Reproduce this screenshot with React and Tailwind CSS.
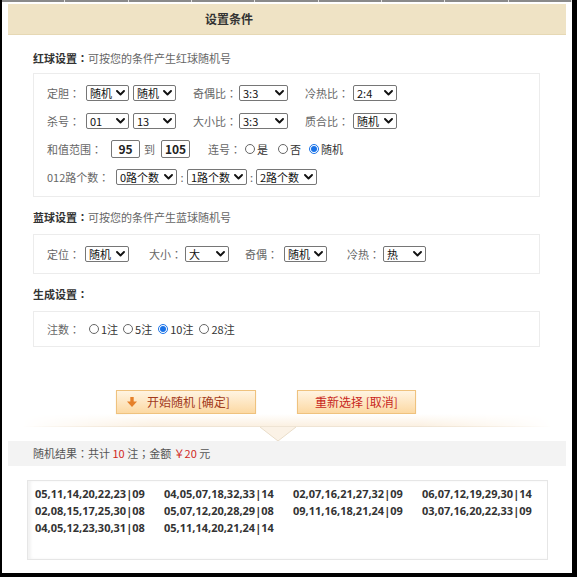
import React from "react";

function C({ ch = "：" }) {
  return <span className="font-['Noto_Sans_CJK_JP',sans-serif]">{ch}</span>;
}

function Chevron() {
  return (
    <svg width="9" height="6" viewBox="0 0 9 6" className="shrink-0">
      <path d="M1 1 L4.5 4.5 L8 1" fill="none" stroke="#111" strokeWidth="1.9" strokeLinecap="round" strokeLinejoin="round" />
    </svg>
  );
}

function Sel({ value, w }) {
  return (
    <div
      className={`flex items-center justify-between h-[16px] border border-[#767676] rounded-[2px] bg-white pl-[3px] pr-[3px] text-[11px] text-[#111] leading-none ${w}`}
    >
      <span>{value}</span>
      <Chevron />
    </div>
  );
}

function Radio({ label, checked }) {
  return (
    <div className="flex items-center text-[11px] text-[#333]">
      {checked ? (
        <span className="w-[10px] h-[10px] rounded-full border border-[#1a73e8] flex items-center justify-center mr-[2px]">
          <span className="w-[6px] h-[6px] rounded-full bg-[#1a73e8]" />
        </span>
      ) : (
        <span className="w-[10px] h-[10px] rounded-full border border-[#666] bg-white mr-[2px]" />
      )}
      <span>{label}</span>
    </div>
  );
}

function Label({ children, w, ml = "" }) {
  return (
    <span className={`text-[11px] text-[#666] shrink-0 ${w} ${ml}`}>
      {children}
      <C />
    </span>
  );
}

function NumInput({ value }) {
  return (
    <div className="w-[29px] h-[18px] border border-[#767676] rounded-[2px] flex items-center justify-center text-[12px] font-bold text-[#222] bg-white">
      {value}
    </div>
  );
}

const results = [
  "05,11,14,20,22,23|09",
  "04,05,07,18,32,33|14",
  "02,07,16,21,27,32|09",
  "06,07,12,19,29,30|14",
  "02,08,15,17,25,30|08",
  "05,07,12,20,28,29|08",
  "09,11,16,18,21,24|09",
  "03,07,16,20,22,33|09",
  "04,05,12,23,30,31|08",
  "05,11,14,20,21,24|14",
];

export default function App() {
  return (
    <div className="w-[577px] h-[577px] overflow-hidden bg-white border-l-2 border-r-[5px] border-b-4 border-black font-['Noto_Sans_CJK_SC','Noto_Sans',sans-serif]">
      {/* top strip */}
      <div className="h-[2px] bg-[#8a8a8a] flex">
        {Array.from({ length: 9 }).map((_, i) => (
          <div key={i} className="w-[64px] h-[2px] border-r border-[#e0e0e0]" />
        ))}
      </div>
      {/* header */}
      <div className="mt-[2px] mx-[6px] h-[31px] bg-[#efe3c5] border-b border-[#e6d8b4] flex items-center pl-[197px] text-[12px] font-bold text-[#333]">
        设置条件
      </div>

      {/* red ball */}
      <div className="pl-[31px] mt-[15px] h-[16px] leading-[16px] text-[11px]">
        <span className="font-bold text-[#333]">红球设置<C /></span>
        <span className="text-[#666]">可按您的条件产生红球随机号</span>
      </div>
      <div className="ml-[31px] mt-[7px] w-[507px] h-[124px] border border-[#ececec] pt-[5px] pl-[13px]">
        <div className="flex items-center h-[28px]">
          <Label w="w-[39px]">定胆</Label>
          <Sel value="随机" w="w-[43px]" />
          <div className="w-[4px]" />
          <Sel value="随机" w="w-[43px]" />
          <Label w="w-[46px]" ml="ml-[17px]">奇偶比</Label>
          <Sel value="3:3" w="w-[49px]" />
          <Label w="w-[48px]" ml="ml-[17px]">冷热比</Label>
          <Sel value="2:4" w="w-[44px]" />
        </div>
        <div className="flex items-center h-[28px]">
          <Label w="w-[39px]">杀号</Label>
          <Sel value="01" w="w-[43px]" />
          <div className="w-[4px]" />
          <Sel value="13" w="w-[43px]" />
          <Label w="w-[46px]" ml="ml-[17px]">大小比</Label>
          <Sel value="3:3" w="w-[49px]" />
          <Label w="w-[48px]" ml="ml-[17px]">质合比</Label>
          <Sel value="随机" w="w-[44px]" />
        </div>
        <div className="flex items-center h-[28px]">
          <Label w="w-[64px]">和值范围</Label>
          <NumInput value="95" />
          <span className="text-[11px] text-[#666] ml-[4px] mr-[6px]">到</span>
          <NumInput value="105" />
          <Label w="w-[37px]" ml="ml-[18px]">连号</Label>
          <Radio label="是" />
          <div className="w-[10px]" />
          <Radio label="否" />
          <div className="w-[8px]" />
          <Radio label="随机" checked />
        </div>
        <div className="flex items-center h-[28px]">
          <Label w="w-[69px]">012路个数</Label>
          <Sel value="0路个数" w="w-[61px]" />
          <span className="text-[11px] text-[#666] w-[10px] text-center">:</span>
          <Sel value="1路个数" w="w-[60px]" />
          <span className="text-[11px] text-[#666] w-[9px] text-center">:</span>
          <Sel value="2路个数" w="w-[61px]" />
        </div>
      </div>

      {/* blue ball */}
      <div className="pl-[31px] mt-[12px] h-[16px] leading-[16px] text-[11px]">
        <span className="font-bold text-[#333]">蓝球设置<C /></span>
        <span className="text-[#666]">可按您的条件产生蓝球随机号</span>
      </div>
      <div className="ml-[31px] mt-[9px] w-[507px] h-[40px] border border-[#ececec] pt-[5px] pl-[13px]">
        <div className="flex items-center h-[28px]">
          <Label w="w-[38px]">定位</Label>
          <Sel value="随机" w="w-[44px]" />
          <Label w="w-[36px]" ml="ml-[20px]">大小</Label>
          <Sel value="大" w="w-[44px]" />
          <Label w="w-[39px]" ml="ml-[16px]">奇偶</Label>
          <Sel value="随机" w="w-[43px]" />
          <Label w="w-[36px]" ml="ml-[20px]">冷热</Label>
          <Sel value="热" w="w-[43px]" />
        </div>
      </div>

      {/* generate */}
      <div className="pl-[31px] mt-[12px] h-[16px] leading-[16px] text-[11px]">
        <span className="font-bold text-[#333]">生成设置<C /></span>
      </div>
      <div className="ml-[31px] mt-[9px] w-[507px] h-[36px] border border-[#ececec] pt-[3px] pl-[13px]">
        <div className="flex items-center h-[28px]">
          <Label w="w-[42px]">注数</Label>
          <Radio label="1注" />
          <div className="w-[5px]" />
          <Radio label="5注" />
          <div className="w-[6px]" />
          <Radio label="10注" checked />
          <div className="w-[6px]" />
          <Radio label="28注" />
        </div>
      </div>

      {/* buttons */}
      <div className="mt-[43px] flex pl-[114px] h-[24px]">
        <div className="w-[140px] h-[24px] border border-[#efc27e] bg-linear-to-b from-[#fff4e2] to-[#fcd9a3] flex items-center pl-[10px] text-[12px] text-[#a23a1c] shadow-[0_1px_1px_rgba(200,150,80,0.25)]">
          <svg width="10" height="10" viewBox="0 0 10 10" className="mr-[10px]">
            <rect x="3.3" y="0" width="3.4" height="5" fill="#e5802a" />
            <polygon points="0,4.5 10,4.5 5,10" fill="#e5802a" />
          </svg>
          <span>开始随机 [确定]</span>
        </div>
        <div className="ml-[41px] w-[119px] h-[24px] border border-[#efc27e] bg-linear-to-b from-[#fff4e2] to-[#fcd9a3] flex items-center justify-center text-[12px] text-[#c8261c] shadow-[0_1px_1px_rgba(200,150,80,0.25)]">
          重新选择 [取消]
        </div>
      </div>

      {/* decorative band with pointer */}
      <div className="h-[27px]">
        <svg width="570" height="27" viewBox="0 0 570 27">
          <defs>
            <linearGradient id="vg" x1="0" y1="0" x2="0" y2="1">
              <stop offset="0" stopColor="#ffffff" />
              <stop offset="1" stopColor="#fbefdf" />
            </linearGradient>
            <linearGradient id="hg" x1="0" y1="0" x2="1" y2="0">
              <stop offset="0" stopColor="#fff" stopOpacity="0" />
              <stop offset="0.25" stopColor="#fff" stopOpacity="1" />
              <stop offset="0.75" stopColor="#fff" stopOpacity="1" />
              <stop offset="1" stopColor="#fff" stopOpacity="0" />
            </linearGradient>
            <mask id="m">
              <rect x="20" y="0" width="530" height="14" fill="url(#hg)" />
            </mask>
          </defs>
          <rect x="20" y="0" width="530" height="13" fill="url(#vg)" mask="url(#m)" />
          <rect x="20" y="12" width="530" height="1" fill="#efe4d4" mask="url(#m)" />
          <polygon points="258,13 276,27 294,13" fill="#fbf2e6" />
          <polyline points="258,13 276,27 294,13" fill="none" stroke="#e9ddca" strokeWidth="1" />
        </svg>
      </div>

      {/* results header */}
      <div className="mx-[6px] h-[25px] bg-[#f3f3f3] flex items-center pl-[25px] text-[11px] text-[#555]">
        随机结果<C />共计&nbsp;<span className="text-[#d0281e]">10</span>&nbsp;注<C ch="；" />金额&nbsp;
        <span className="text-[#d0281e]">￥20</span>&nbsp;元
      </div>

      {/* results box */}
      <div className="mt-[14px] ml-[25px] w-[521px] h-[80px] border border-[#e6e6e6] shadow-[inset_3px_0_3px_rgba(0,0,0,0.05)] pl-[7px] pt-[4px]">
        <div className="grid grid-cols-[repeat(4,129px)] leading-[17px] text-[11px] font-bold text-[#333] font-['Open_Sans',sans-serif]">
          {results.map((r) => (
            <span key={r}>{r}</span>
          ))}
        </div>
      </div>
    </div>
  );
}
